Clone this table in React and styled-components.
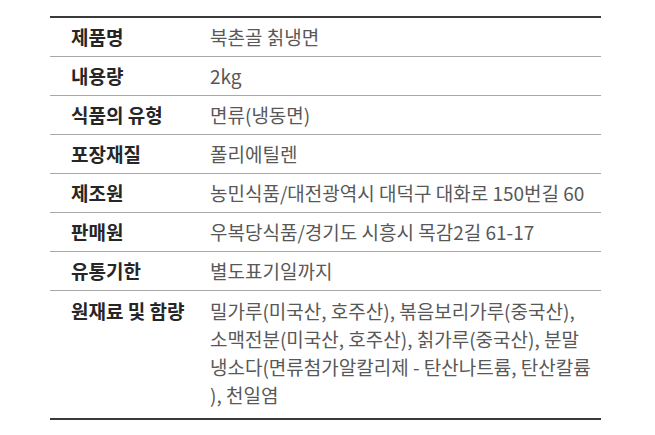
import React from 'react';
import styled, { createGlobalStyle } from 'styled-components';

const GlobalStyle = createGlobalStyle`
  html, body {
    margin: 0;
    padding: 0;
    background: #ffffff;
  }
  body {
    font-family: "Noto Sans CJK KR", "Noto Sans", sans-serif;
  }
`;

const Page = styled.div`
  width: 655px;
  height: 435px;
  padding: 16px 0 0 50px;
  box-sizing: border-box;
  background: #ffffff;
`;

const Table = styled.div`
  width: 551px;
  border-top: 2px solid #3a3a3a;
  border-bottom: 2px solid #3a3a3a;
`;

const Row = styled.div`
  display: grid;
  grid-template-columns: 160px 1fr;
  padding: ${(props) => (props.tall ? '6px 0 9px' : '5px 0')};
  border-top: ${(props) => (props.first ? '0' : '1px solid #a8a8a8')};
  font-size: 19px;
  line-height: 28px;
`;

const Label = styled.div`
  padding-left: 21px;
  color: #262626;
  font-weight: 700;
  white-space: nowrap;
`;

const Value = styled.div`
  color: #585858;
  font-weight: 400;
  white-space: nowrap;
`;

const Line = styled.span`
  display: block;
`;

const rows = [
  ['제품명', '북촌골 칡냉면'],
  ['내용량', '2kg'],
  ['식품의 유형', '면류(냉동면)'],
  ['포장재질', '폴리에틸렌'],
  ['제조원', '농민식품/대전광역시 대덕구 대화로 150번길 60'],
  ['판매원', '우복당식품/경기도 시흥시 목감2길 61-17'],
  ['유통기한', '별도표기일까지'],
];

const ingredients = [
  '밀가루(미국산, 호주산), 볶음보리가루(중국산),',
  '소맥전분(미국산, 호주산), 칡가루(중국산), 분말',
  '냉소다(면류첨가알칼리제 - 탄산나트륨, 탄산칼륨',
  '), 천일염',
];

const App = () => {
  return (
    <Page>
      <GlobalStyle />
      <Table>
        {rows.map(([label, value], i) => (
          <Row key={label} first={i === 0}>
            <Label>{label}</Label>
            <Value>{value}</Value>
          </Row>
        ))}
        <Row tall>
          <Label>원재료 및 함량</Label>
          <Value>
            {ingredients.map((line) => (
              <Line key={line}>{line}</Line>
            ))}
          </Value>
        </Row>
      </Table>
    </Page>
  );
};

export default App;
